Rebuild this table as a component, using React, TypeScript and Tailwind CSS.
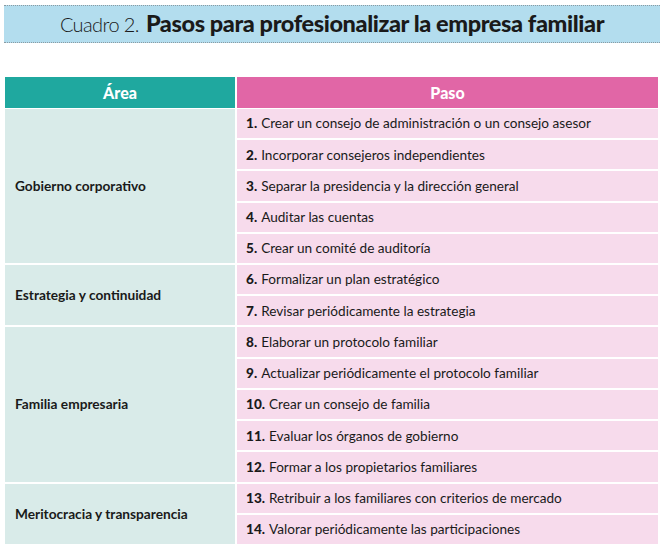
const rows = [
  "Crear un consejo de administración o un consejo asesor",
  "Incorporar consejeros independientes",
  "Separar la presidencia y la dirección general",
  "Auditar las cuentas",
  "Crear un comité de auditoría",
  "Formalizar un plan estratégico",
  "Revisar periódicamente la estrategia",
  "Elaborar un protocolo familiar",
  "Actualizar periódicamente el protocolo familiar",
  "Crear un consejo de familia",
  "Evaluar los órganos de gobierno",
  "Formar a los propietarios familiares",
  "Retribuir a los familiares con criterios de mercado",
  "Valorar periódicamente las participaciones",
];

const areas = [
  { label: "Gobierno corporativo", row: "row-start-1 row-span-5" },
  { label: "Estrategia y continuidad", row: "row-start-6 row-span-2" },
  { label: "Familia empresaria", row: "row-start-8 row-span-5" },
  { label: "Meritocracia y transparencia", row: "row-start-13 row-span-2" },
];

export default function App() {
  return (
    <div className="w-[665px] h-[553px] bg-white pt-[5px] font-['Lato',sans-serif] text-[#1a1a1a]">
      <div className="mx-[4px] w-[656px] h-[38px] bg-[#b3ddee] border-y border-dotted border-[#8a9aa2] flex items-center justify-center leading-none">
        <span className="font-light text-[20px] tracking-[-0.6px] mr-[7px]">Cuadro 2.</span>
        <span className="font-black text-[23.5px] tracking-[-0.4px]">Pasos para profesionalizar la empresa familiar</span>
      </div>

      <div className="ml-[5px] mt-[34px] w-[653px]">
        <div className="grid grid-cols-[230px_421px] gap-x-[2px] h-[31px]">
          <div className="bg-[#1fa89f] text-white font-black text-[16px] flex items-center justify-center">Área</div>
          <div className="bg-[#e166a6] text-white font-black text-[16px] flex items-center justify-center">Paso</div>
        </div>
        <div className="mt-[1px] h-[435px] grid grid-cols-[230px_421px] grid-rows-14 gap-x-[2px] gap-y-[2px]">
          {areas.map((a) => (
            <div key={a.label} className={`${a.row} col-start-1 bg-[#d9ebe9] flex items-center pl-[10px] text-[13.7px] font-bold`}>
              {a.label}
            </div>
          ))}
          {rows.map((r, i) => (
            <div key={i} className="col-start-2 bg-[#f7dbec] flex items-center pl-[9px] text-[13.6px]">
              <span className="font-black mr-[4px]">{i + 1}.</span>
              {r}
            </div>
          ))}
        </div>
      </div>
    </div>
  );
}
